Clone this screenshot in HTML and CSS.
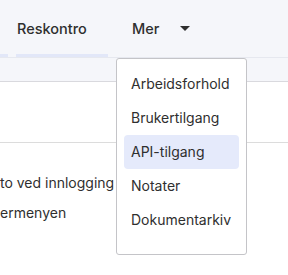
FILE: index.html
```html
<!DOCTYPE html>
<html lang="no">
<head>
    <meta charset="UTF-8">
    <title>Innstillinger</title>
    <link rel="stylesheet" href="styles.css">
</head>
<body>
    <div class="topbar">
        <nav class="tabs">
            <div class="tab tab-cut"></div>
            <div class="tab tab-active">Reskontro</div>
            <div class="tab tab-more">Mer <span class="caret"></span></div>
        </nav>
        <div class="subbar"></div>
    </div>

    <div class="content">
        <div class="divider"></div>
        <p class="line first">to ved innlogging</p>
        <p class="line">ermenyen</p>
    </div>

    <ul class="menu">
        <li class="menu-item">Arbeidsforhold</li>
        <li class="menu-item">Brukertilgang</li>
        <li class="menu-item selected">API-tilgang</li>
        <li class="menu-item">Notater</li>
        <li class="menu-item">Dokumentarkiv</li>
    </ul>
</body>
</html>
```

FILE: styles.css
```css
body {
    margin: 0;
    width: 288px;
    height: 275px;
    overflow: hidden;
    position: relative;
    font-family: Inter, "Noto Sans", sans-serif;
    font-size: 14px;
    color: #2f2f2f;
    background: white;
}
.topbar {
    background: #f5f6fa;
    border-bottom: 1px solid #d9d9de;
}
.tabs {
    display: flex;
    height: 58px;
    border-bottom: 1px solid #e6e8ef;
    box-sizing: border-box;
}
.tab {
    display: flex;
    align-items: center;
    font-weight: 500;
    font-size: 14.5px;
    border-bottom: 3px solid transparent;
    padding-top: 3px;
}
.tab-cut {
    width: 8px;
    border-bottom-color: #e2e7f8;
}
.tab-active {
    margin-left: 8px;
    width: 91px;
    padding-left: 1px;
    border-bottom-color: #e2e7f8;
}
.tab-more {
    margin-left: 24px;
    gap: 21px;
}
.caret {
    width: 0;
    height: 0;
    border-left: 5px solid transparent;
    border-right: 5px solid transparent;
    border-top: 5px solid #2f2f2f;
}
.subbar {
    height: 23px;
}
.content {
    padding-top: 60px;
}
.divider {
    border-top: 1px solid #dcdcdc;
}
.line {
    margin: 0;
    line-height: 30px;
}
.line.first {
    margin-top: 25px;
}
.menu {
    position: absolute;
    left: 116px;
    top: 58px;
    width: 131px;
    margin: 0;
    padding: 8px 7px 17px;
    list-style: none;
    background: white;
    border: 1px solid #c4c4c8;
    border-radius: 3px;
    box-sizing: border-box;
}
.menu-item {
    height: 34px;
    line-height: 34px;
    padding-left: 7px;
    border-radius: 4px;
}
.menu-item.selected {
    background: #e5eafb;
}
```
